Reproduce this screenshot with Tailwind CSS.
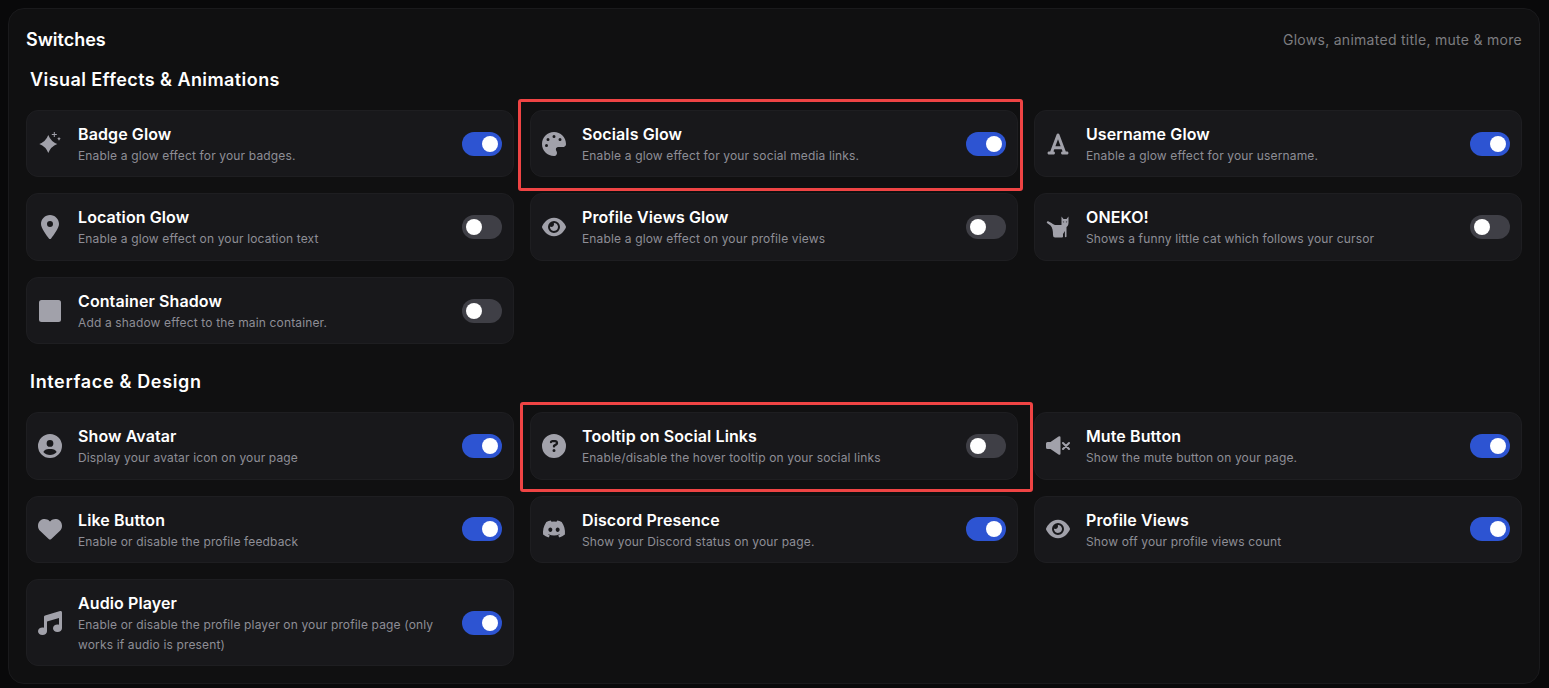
<!DOCTYPE html>
<html lang="en">
<head>
  <meta charset="UTF-8">
  <meta name="viewport" content="width=device-width, initial-scale=1">
  <title>Switches</title>
  <script src="https://cdn.jsdelivr.net/npm/@tailwindcss/browser@4"></script>
</head>
<body class="relative h-[688px] overflow-hidden bg-[#09090a] font-['Inter',sans-serif] text-white">
  <div class="mt-2 ml-2 mr-[9px] h-[676px] rounded-2xl border border-[#1a1a1c] bg-[#101011] px-[17px] pt-[17px]">

    <div class="flex h-7 items-center justify-between">
      <h1 class="text-lg leading-7 font-semibold">Switches</h1>
      <p class="text-sm leading-7 tracking-[0.28px] text-[#7d7d80]">Glows, animated title, mute &amp; more</p>
    </div>

    <!-- Visual effects -->
    <h2 class="mt-3 mb-[15.750px] pl-1 text-lg leading-7 font-semibold tracking-[0.42px]">Visual Effects &amp; Animations</h2>
    <div class="grid grid-cols-3 gap-4">
      <div class="flex items-center gap-4 rounded-xl border border-[#1e1e21] bg-[#18181b] px-[11px] py-[11px]">
        <svg class="size-6 shrink-0 fill-[#a1a1aa]" viewBox="0 0 24 24"><path d="M10.300 3Q12.800 9.500 19.300 12 12.800 14.500 10.300 21 7.800 14.500 1.300 12 7.800 9.500 10.300 3z"/><path d="M15.800 0h1v2h2v1h-2v2h-1V3h-2V2h2z"/><path d="M21 4.800c.3 1.200.8 1.700 2 2-1.200.4-1.700.9-2 2.100-.3-1.200-.8-1.700-2-2.100 1.200-.3 1.700-.8 2-2z"/></svg>
        <div class="min-w-0 flex-1">
          <h3 class="text-base leading-6 font-semibold tracking-[0.1px]">Badge Glow</h3>
          <p class="text-xs leading-relaxed tracking-[0.15px] text-[#8e8e96]">Enable a glow effect for your badges.</p>
        </div>
        <div class="flex h-6 w-10 shrink-0 items-center justify-end rounded-full bg-[#2d54d2] px-1"><span class="size-4 rounded-full bg-white"></span></div>
      </div>
      <div class="flex items-center gap-4 rounded-xl border border-[#1e1e21] bg-[#18181b] px-[11px] py-[11px]">
        <svg class="size-6 shrink-0 fill-[#a1a1aa]" viewBox="0 0 512 512"><path d="M512 256c0 .9 0 1.800 0 2.700c-.4 36.500-33.600 61.300-70.100 61.300H344c-26.500 0-48 21.500-48 48c0 3.400 .4 6.700 1 9.900c2.100 10.200 6.500 20 10.800 29.900c6.100 13.800 12.100 27.500 12.100 42c0 31.800-21.600 60.700-53.400 62c-3.500 .1-7 .2-10.600 .2C114.600 512 0 397.400 0 256S114.600 0 256 0S512 114.600 512 256zM128 288a32 32 0 1 0 -64 0 32 32 0 1 0 64 0zm0-96a32 32 0 1 0 0-64 32 32 0 1 0 0 64zM288 96a32 32 0 1 0 -64 0 32 32 0 1 0 64 0zm96 96a32 32 0 1 0 0-64 32 32 0 1 0 0 64z"/></svg>
        <div class="min-w-0 flex-1">
          <h3 class="text-base leading-6 font-semibold tracking-[0.1px]">Socials Glow</h3>
          <p class="text-xs leading-relaxed tracking-[0.15px] text-[#8e8e96]">Enable a glow effect for your social media links.</p>
        </div>
        <div class="flex h-6 w-10 shrink-0 items-center justify-end rounded-full bg-[#2d54d2] px-1"><span class="size-4 rounded-full bg-white"></span></div>
      </div>
      <div class="flex items-center gap-4 rounded-xl border border-[#1e1e21] bg-[#18181b] px-[11px] py-[11px]">
        <svg class="size-6 shrink-0 fill-[#a1a1aa]" viewBox="0 0 448 512"><path d="M254 52.800C249.300 40.300 237.300 32 224 32s-25.300 8.300-30 20.800L57.800 416H32c-17.700 0-32 14.300-32 32s14.300 32 32 32h96c17.700 0 32-14.300 32-32s-14.300-32-32-32h-1.800l18-48H303.800l18 48H320c-17.700 0-32 14.300-32 32s14.300 32 32 32h96c17.700 0 32-14.300 32-32s-14.300-32-32-32H390.200L254 52.800zM279.800 304H168.200L224 155.100 279.800 304z"/></svg>
        <div class="min-w-0 flex-1">
          <h3 class="text-base leading-6 font-semibold tracking-[0.1px]">Username Glow</h3>
          <p class="text-xs leading-relaxed tracking-[0.15px] text-[#8e8e96]">Enable a glow effect for your username.</p>
        </div>
        <div class="flex h-6 w-10 shrink-0 items-center justify-end rounded-full bg-[#2d54d2] px-1"><span class="size-4 rounded-full bg-white"></span></div>
      </div>

      <div class="flex items-center gap-4 rounded-xl border border-[#1e1e21] bg-[#18181b] px-[11px] py-[11px]">
        <svg class="size-6 shrink-0 fill-[#a1a1aa]" viewBox="0 0 512 512"><path transform="translate(64)" d="M215.700 499.200C267 435 384 279.400 384 192C384 86 298 0 192 0S0 86 0 192c0 87.400 117 243 168.300 307.200c12.300 15.300 35.100 15.300 47.400 0zM192 128a64 64 0 1 1 0 128 64 64 0 1 1 0-128z"/></svg>
        <div class="min-w-0 flex-1">
          <h3 class="text-base leading-6 font-semibold tracking-[0.1px]">Location Glow</h3>
          <p class="text-xs leading-relaxed tracking-[0.15px] text-[#8e8e96]">Enable a glow effect on your location text</p>
        </div>
        <div class="flex h-6 w-10 shrink-0 items-center justify-start rounded-full bg-[#3f3f46] px-1"><span class="size-4 rounded-full bg-white"></span></div>
      </div>
      <div class="flex items-center gap-4 rounded-xl border border-[#1e1e21] bg-[#18181b] px-[11px] py-[11px]">
        <svg class="size-6 shrink-0 fill-[#a1a1aa]" viewBox="0 0 576 512"><path d="M288 32c-80.800 0-145.500 36.800-192.600 80.600C48.600 156 17.300 208 2.500 243.700c-3.300 7.900-3.300 16.700 0 24.600C17.300 304 48.600 356 95.400 399.400C142.500 443.200 207.200 480 288 480s145.500-36.800 192.600-80.600c46.800-43.500 78.100-95.400 93-131.100c3.300-7.900 3.300-16.700 0-24.600c-14.900-35.700-46.200-87.700-93-131.100C433.500 68.800 368.800 32 288 32zM144 256a144 144 0 1 1 288 0 144 144 0 1 1 -288 0zm144-64c0 35.300-28.700 64-64 64c-7.100 0-13.900-1.200-20.300-3.300c-5.500-1.800-11.900 1.600-11.700 7.400c.3 6.900 1.300 13.800 3.200 20.700c13.700 51.200 66.400 81.600 117.600 67.900s81.600-66.400 67.900-117.600c-11.100-41.500-47.800-69.400-88.600-71.100c-5.800-.2-9.200 6.100-7.400 11.700c2.100 6.400 3.300 13.200 3.300 20.300z"/></svg>
        <div class="min-w-0 flex-1">
          <h3 class="text-base leading-6 font-semibold tracking-[0.1px]">Profile Views Glow</h3>
          <p class="text-xs leading-relaxed tracking-[0.15px] text-[#8e8e96]">Enable a glow effect on your profile views</p>
        </div>
        <div class="flex h-6 w-10 shrink-0 items-center justify-start rounded-full bg-[#3f3f46] px-1"><span class="size-4 rounded-full bg-white"></span></div>
      </div>
      <div class="flex items-center gap-4 rounded-xl border border-[#1e1e21] bg-[#18181b] px-[11px] py-[11px]">
        <svg class="size-6 shrink-0" viewBox="0 0 24 24"><path class="fill-[#a1a1aa]" d="M15.500 1.500L17.500 4h3l2-2.500V8c0 2.500-1.300 3.500-2 4v9.500a.8.8 0 0 1-1.600 0V16L17 19v2.500q0 1-1 1H9q-2 0-2-2.500c0-4-.5-7.500-2.500-9.500L1 8c-.5-.7 0-2.200 1.200-1.700L5.500 8C7.500 9.500 8.500 10 10 10h5.500z"/><path class="fill-[#18181b]" d="M16.800 6.200l1.600.7-1.200.6zM21.200 6.200l-1.600.7 1.200.6z"/></svg>
        <div class="min-w-0 flex-1">
          <h3 class="text-base leading-6 font-semibold tracking-[0.1px]">ONEKO!</h3>
          <p class="text-xs leading-relaxed tracking-[0.15px] text-[#8e8e96]">Shows a funny little cat which follows your cursor</p>
        </div>
        <div class="flex h-6 w-10 shrink-0 items-center justify-start rounded-full bg-[#3f3f46] px-1"><span class="size-4 rounded-full bg-white"></span></div>
      </div>

      <div class="flex items-center gap-4 rounded-xl border border-[#1e1e21] bg-[#18181b] px-[11px] py-[11px]">
        <svg class="size-6 shrink-0 fill-[#a1a1aa]" viewBox="0 0 24 24"><rect x="1" y="1" width="22" height="22" rx="2.500"/></svg>
        <div class="min-w-0 flex-1">
          <h3 class="text-base leading-6 font-semibold tracking-[0.1px]">Container Shadow</h3>
          <p class="text-xs leading-relaxed tracking-[0.15px] text-[#8e8e96]">Add a shadow effect to the main container.</p>
        </div>
        <div class="flex h-6 w-10 shrink-0 items-center justify-start rounded-full bg-[#3f3f46] px-1"><span class="size-4 rounded-full bg-white"></span></div>
      </div>
    </div>

    <!-- Interface -->
    <h2 class="mt-[23.750px] mb-4 pl-1 text-lg leading-7 font-semibold tracking-[0.65px]">Interface &amp; Design</h2>
    <div class="grid grid-cols-3 gap-4">
      <div class="flex items-center gap-4 rounded-xl border border-[#1e1e21] bg-[#18181b] px-[11px] py-[11px]">
        <svg class="size-6 shrink-0 fill-[#a1a1aa]" viewBox="0 0 512 512"><path d="M399 384.200C376.900 345.800 335.400 320 288 320H224c-47.400 0-88.900 25.800-111 64.200c35.200 39.200 86.200 63.800 143 63.800s107.800-24.700 143-63.800zM0 256a256 256 0 1 1 512 0A256 256 0 1 1 0 256zm256 16a72 72 0 1 0 0-144 72 72 0 1 0 0 144z"/></svg>
        <div class="min-w-0 flex-1">
          <h3 class="text-base leading-6 font-semibold tracking-[0.1px]">Show Avatar</h3>
          <p class="text-xs leading-relaxed tracking-[0.15px] text-[#8e8e96]">Display your avatar icon on your page</p>
        </div>
        <div class="flex h-6 w-10 shrink-0 items-center justify-end rounded-full bg-[#2d54d2] px-1"><span class="size-4 rounded-full bg-white"></span></div>
      </div>
      <div class="flex items-center gap-4 rounded-xl border border-[#1e1e21] bg-[#18181b] px-[11px] py-[11px]">
        <svg class="size-6 shrink-0 fill-[#a1a1aa]" viewBox="0 0 512 512"><path d="M256 512A256 256 0 1 0 256 0a256 256 0 1 0 0 512zM169.800 165.300c7.900-22.300 29.100-37.300 52.800-37.300h58.300c34.900 0 63.100 28.300 63.100 63.100c0 22.600-12.100 43.500-31.700 54.800L280 264.400c-.2 13-10.900 23.600-24 23.600c-13.300 0-24-10.700-24-24V250.500c0-8.600 4.600-16.500 12.100-20.800l44.300-25.400c4.700-2.700 7.600-7.700 7.600-13.100c0-8.400-6.800-15.100-15.100-15.100H222.600c-3.400 0-6.400 2.100-7.500 5.300l-.4 1.200c-4.400 12.500-18.200 19-30.600 14.600s-19-18.200-14.600-30.600l.4-1.200zM224 352a32 32 0 1 1 64 0 32 32 0 1 1 -64 0z"/></svg>
        <div class="min-w-0 flex-1">
          <h3 class="text-base leading-6 font-semibold tracking-[0.1px]">Tooltip on Social Links</h3>
          <p class="text-xs leading-relaxed tracking-[0.15px] text-[#8e8e96]">Enable/disable the hover tooltip on your social links</p>
        </div>
        <div class="flex h-6 w-10 shrink-0 items-center justify-start rounded-full bg-[#3f3f46] px-1"><span class="size-4 rounded-full bg-white"></span></div>
      </div>
      <div class="flex items-center gap-4 rounded-xl border border-[#1e1e21] bg-[#18181b] px-[11px] py-[11px]">
        <svg class="size-6 shrink-0" viewBox="0 0 24 24"><path class="fill-[#a1a1aa]" d="M0 9.500Q0 8 1.500 8h3l8-5.500q2-1 2 1v16q0 2-2 1l-8-5.500h-3Q0 15 0 13.500z"/><path class="stroke-[#a1a1aa]" stroke-width="2" stroke-linecap="round" d="M17 9l6 6M23 9l-6 6"/></svg>
        <div class="min-w-0 flex-1">
          <h3 class="text-base leading-6 font-semibold tracking-[0.1px]">Mute Button</h3>
          <p class="text-xs leading-relaxed tracking-[0.15px] text-[#8e8e96]">Show the mute button on your page.</p>
        </div>
        <div class="flex h-6 w-10 shrink-0 items-center justify-end rounded-full bg-[#2d54d2] px-1"><span class="size-4 rounded-full bg-white"></span></div>
      </div>

      <div class="flex items-center gap-4 rounded-xl border border-[#1e1e21] bg-[#18181b] px-[11px] py-[11px]">
        <svg class="size-6 shrink-0 fill-[#a1a1aa]" viewBox="0 0 512 512"><path d="M47.600 300.400L228.300 469.100c7.500 7 17.400 10.900 27.700 10.900s20.200-3.900 27.700-10.900L464.400 300.400c30.400-28.300 47.600-68 47.600-109.500v-5.800c0-69.900-50.500-129.500-119.400-141C347 36.500 300.600 51.400 268 84L256 96 244 84c-32.600-32.600-79-47.500-124.600-39.900C50.500 55.600 0 115.200 0 185.100v5.800c0 41.500 17.200 81.200 47.600 109.500z"/></svg>
        <div class="min-w-0 flex-1">
          <h3 class="text-base leading-6 font-semibold tracking-[0.1px]">Like Button</h3>
          <p class="text-xs leading-relaxed tracking-[0.15px] text-[#8e8e96]">Enable or disable the profile feedback</p>
        </div>
        <div class="flex h-6 w-10 shrink-0 items-center justify-end rounded-full bg-[#2d54d2] px-1"><span class="size-4 rounded-full bg-white"></span></div>
      </div>
      <div class="flex items-center gap-4 rounded-xl border border-[#1e1e21] bg-[#18181b] px-[11px] py-[11px]">
        <svg class="size-6 shrink-0 fill-[#a1a1aa]" viewBox="0 0 640 512"><path d="M524.531,69.836a1.500,1.500,0,0,0-.764-.7A485.065,485.065,0,0,0,404.081,32.030a1.816,1.816,0,0,0-1.923.91,337.461,337.461,0,0,0-14.900,30.600,447.848,447.848,0,0,0-134.426,0,309.541,309.541,0,0,0-15.135-30.600,1.890,1.890,0,0,0-1.924-.91A483.689,483.689,0,0,0,116.085,69.137a1.712,1.712,0,0,0-.788.676C39.068,183.651,18.186,294.690,28.430,404.354a2.016,2.016,0,0,0,.765,1.375A487.666,487.666,0,0,0,176.020,479.918a1.900,1.900,0,0,0,2.063-.676A348.200,348.200,0,0,0,208.120,430.400a1.860,1.860,0,0,0-1.019-2.588,321.173,321.173,0,0,1-45.868-21.853,1.885,1.885,0,0,1-.185-3.126c3.082-2.309,6.166-4.711,9.109-7.137a1.819,1.819,0,0,1,1.900-.256c96.229,43.917,200.410,43.917,295.500,0a1.812,1.812,0,0,1,1.924.233c2.944,2.426,6.027,4.851,9.132,7.160a1.884,1.884,0,0,1-.162,3.126,301.407,301.407,0,0,1-45.890,21.830,1.875,1.875,0,0,0-1,2.611,391.055,391.055,0,0,0,30.014,48.815,1.864,1.864,0,0,0,2.063.7A486.048,486.048,0,0,0,610.700,405.729a1.882,1.882,0,0,0,.765-1.352C623.729,277.594,590.933,167.465,524.531,69.836ZM222.491,337.580c-28.972,0-52.844-26.587-52.844-59.239S193.056,219.100,222.491,219.100c29.665,0,53.306,26.820,52.843,59.239C275.334,310.993,251.924,337.580,222.491,337.580Zm195.380,0c-28.971,0-52.843-26.587-52.843-59.239S388.437,219.100,417.871,219.100c29.667,0,53.307,26.820,52.844,59.239C470.715,310.993,447.538,337.580,417.871,337.580Z"/></svg>
        <div class="min-w-0 flex-1">
          <h3 class="text-base leading-6 font-semibold tracking-[0.1px]">Discord Presence</h3>
          <p class="text-xs leading-relaxed tracking-[0.15px] text-[#8e8e96]">Show your Discord status on your page.</p>
        </div>
        <div class="flex h-6 w-10 shrink-0 items-center justify-end rounded-full bg-[#2d54d2] px-1"><span class="size-4 rounded-full bg-white"></span></div>
      </div>
      <div class="flex items-center gap-4 rounded-xl border border-[#1e1e21] bg-[#18181b] px-[11px] py-[11px]">
        <svg class="size-6 shrink-0 fill-[#a1a1aa]" viewBox="0 0 576 512"><path d="M288 32c-80.800 0-145.500 36.800-192.600 80.600C48.600 156 17.300 208 2.500 243.700c-3.300 7.900-3.300 16.700 0 24.600C17.300 304 48.600 356 95.400 399.400C142.500 443.200 207.200 480 288 480s145.500-36.800 192.600-80.600c46.800-43.500 78.100-95.400 93-131.100c3.300-7.900 3.300-16.700 0-24.600c-14.900-35.700-46.200-87.700-93-131.100C433.500 68.800 368.800 32 288 32zM144 256a144 144 0 1 1 288 0 144 144 0 1 1 -288 0zm144-64c0 35.300-28.700 64-64 64c-7.100 0-13.900-1.200-20.300-3.300c-5.500-1.800-11.900 1.600-11.700 7.400c.3 6.900 1.300 13.800 3.200 20.700c13.700 51.200 66.400 81.600 117.600 67.900s81.600-66.400 67.900-117.600c-11.100-41.500-47.800-69.400-88.600-71.100c-5.800-.2-9.200 6.100-7.400 11.700c2.100 6.400 3.300 13.200 3.300 20.300z"/></svg>
        <div class="min-w-0 flex-1">
          <h3 class="text-base leading-6 font-semibold tracking-[0.1px]">Profile Views</h3>
          <p class="text-xs leading-relaxed tracking-[0.15px] text-[#8e8e96]">Show off your profile views count</p>
        </div>
        <div class="flex h-6 w-10 shrink-0 items-center justify-end rounded-full bg-[#2d54d2] px-1"><span class="size-4 rounded-full bg-white"></span></div>
      </div>

      <div class="flex items-center gap-4 rounded-xl border border-[#1e1e21] bg-[#18181b] px-[11px] py-[11px]">
        <svg class="size-6 shrink-0 fill-[#a1a1aa]" viewBox="0 0 512 512"><path d="M499.100 6.300c8.100 6 12.900 15.600 12.900 25.700v72V368c0 44.200-43 80-96 80s-96-35.800-96-80s43-80 96-80c11.200 0 22 1.600 32 4.600V147L192 223.800V432c0 44.200-43 80-96 80s-96-35.800-96-80s43-80 96-80c11.200 0 22 1.600 32 4.600V200 128c0-14.100 9.300-26.600 22.800-30.700l320-96c9.700-2.900 20.200-1.100 28.300 4.900z"/></svg>
        <div class="min-w-0 flex-1">
          <h3 class="text-base leading-6 font-semibold tracking-[0.1px]">Audio Player</h3>
          <p class="text-xs leading-relaxed tracking-[0.15px] text-[#8e8e96]">Enable or disable the profile player on your profile page (only works if audio is present)</p>
        </div>
        <div class="flex h-6 w-10 shrink-0 items-center justify-end rounded-full bg-[#2d54d2] px-1"><span class="size-4 rounded-full bg-white"></span></div>
      </div>
    </div>
  </div>

  <!-- red annotation boxes drawn over the screenshot -->
  <div class="absolute top-[99px] left-[518px] h-[92px] w-[505px] rounded-[3px] border-[3px] border-[#ef4444]"></div>
  <div class="absolute top-[402px] left-[520px] h-[90px] w-[513px] rounded-[3px] border-[3px] border-[#ef4444]"></div>
</body>
</html>
